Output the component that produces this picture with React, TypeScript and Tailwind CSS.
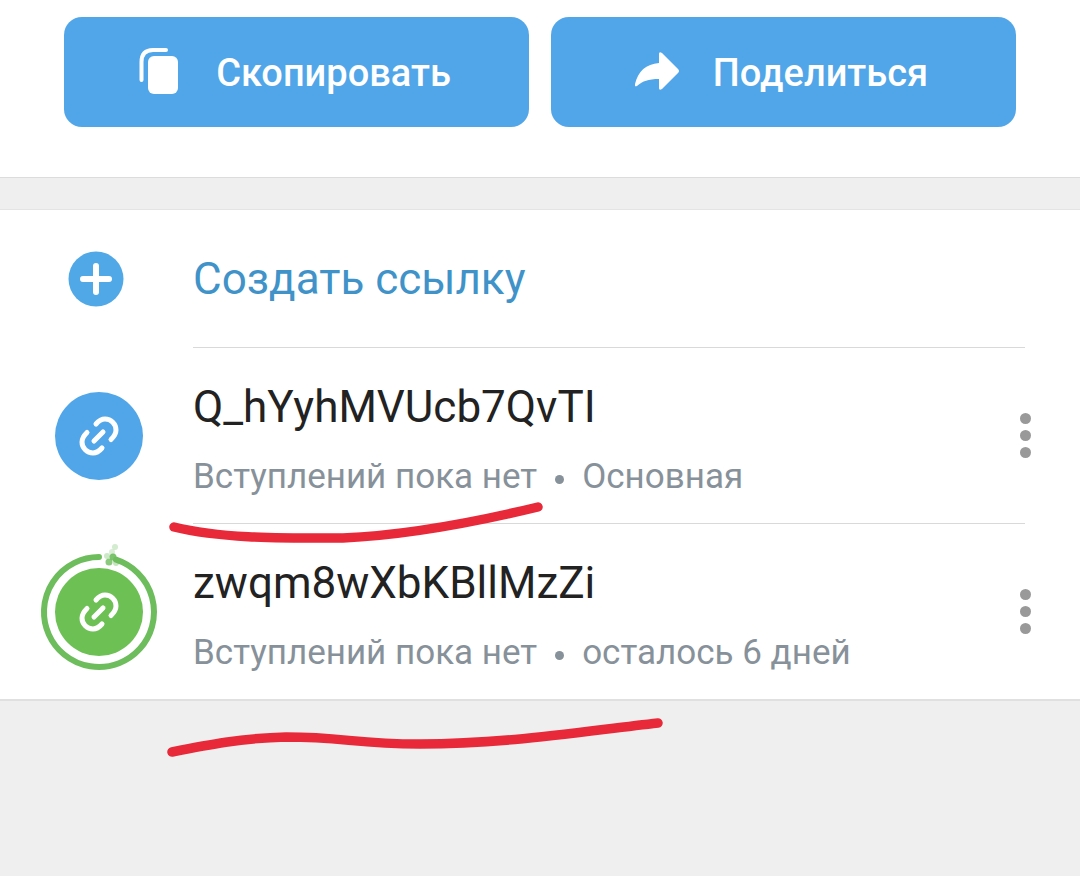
import type { ReactNode } from 'react';

type InviteLink = {
  name: string;
  joined: string;
  status: string;
  temporary: boolean;
};

const links: InviteLink[] = [
  { name: 'Q_hYyhMVUcb7QvTI', joined: 'Вступлений пока нет', status: 'Основная', temporary: false },
  { name: 'zwqm8wXbKBllMzZi', joined: 'Вступлений пока нет', status: 'осталось 6 дней', temporary: true },
];

function CopyIcon() {
  return (
    <svg viewBox="0 0 44 48" className="h-12 w-11 shrink-0" fill="none" aria-hidden="true">
      <path d="M3.5 32V14Q3.5 2 15 2H28" stroke="white" strokeWidth="4" strokeLinecap="round" />
      <rect x="10" y="8" width="30" height="38" rx="6" fill="white" />
    </svg>
  );
}

function ShareIcon() {
  return (
    <svg viewBox="0 0 44 48" className="h-12 w-11 shrink-0" fill="white" aria-hidden="true">
      <path d="M24 15V6Q24 3 27 5L43 21Q45 23 43 25L27 41Q24 43 24 40V31C13 31 8 33 2 38Q-1 39 0 36C3 23 11 16 24 15Z" />
    </svg>
  );
}

function LinkIcon({ temporary }: { temporary: boolean }) {
  return (
    <svg viewBox="-70 -70 140 140" className="-mx-[26px] size-[140px] shrink-0" fill="none" aria-hidden="true">
      <circle r="44" fill={temporary ? '#6dc054' : '#50a6e8'} />
      <g stroke="white" strokeWidth="5" strokeLinecap="round">
        <path d="M-3-12C0-15.500 3-17 6-17A11 11 0 0 1 17-6C17-3 15.500 0 12 3.500" />
        <path d="M3 12C0 15.500-3 17-6 17A11 11 0 0 1-17 6C-17 3-15.500 0-12-3.500" />
        <path d="M-5 5 4-4" />
      </g>
      {temporary && (
        <>
          <path d="M17-52.300A55 55 0 1 1 0-55" stroke="#6dbd5c" strokeWidth="6" strokeLinecap="round" />
          <g fill="#6dbd5c">
            <circle cx="10" cy="-50" r="3.5" opacity=".8" />
            <circle cx="14" cy="-55" r="3.5" opacity=".9" />
            <circle cx="8" cy="-56" r="3" opacity=".35" />
            <circle cx="16" cy="-65" r="3" opacity=".3" />
            <circle cx="13" cy="-60" r="3" opacity=".25" />
            <circle cx="17" cy="-49" r="3" opacity=".4" />
          </g>
        </>
      )}
    </svg>
  );
}

function ActionButton({ icon, children }: { icon: ReactNode; children: ReactNode }) {
  return (
    <button className="flex h-[110px] flex-1 items-center justify-center gap-[34px] rounded-[18px] bg-[#50a6e8] pr-1 text-[38px] font-medium text-white">
      {icon}
      <span className="pt-0.5">{children}</span>
    </button>
  );
}

export default function App() {
  return (
    <div className="min-h-screen bg-[#efefef] font-['Roboto',sans-serif]">
      {/* Actions */}
      <div className="flex gap-[22px] border-b border-[#dcdcdc] bg-white px-16 pt-[17px] pb-[50px]">
        <ActionButton icon={<CopyIcon />}>Скопировать</ActionButton>
        <ActionButton icon={<ShareIcon />}>Поделиться</ActionButton>
      </div>

      {/* Links */}
      <div className="relative mt-[31px] border-t border-b-2 border-t-[#e4e4e4] border-b-[#e0e0e0] bg-white">
        <button className="flex h-[137px] w-full items-center text-left text-[44px] text-[#3f93c9]">
          <span className="flex w-[193px] shrink-0 pl-[68px]">
            <svg viewBox="0 0 56 56" className="size-14" aria-hidden="true">
              <circle cx="28" cy="28" r="27.5" fill="#50a9e6" />
              <path d="M15 28H41M28 15V41" stroke="white" strokeWidth="6" strokeLinecap="round" />
            </svg>
          </span>
          Создать ссылку
        </button>

        <ul>
          {links.map((link) => (
            <li key={link.name}>
              <div className="mr-[55px] ml-[193px] h-px bg-[#d9d9d9]" />
              <div className="flex h-[175px] items-center pr-[33px]">
                <div className="flex w-[193px] shrink-0 pl-[55px]">
                  <LinkIcon temporary={link.temporary} />
                </div>
                <div className="min-w-0 flex-1 pt-3">
                  <p className="text-[44px] leading-[60px] text-[#222222]">{link.name}</p>
                  <p className="mt-2.5 flex items-center text-[35px] leading-[60px] text-[#87919a]">
                    {link.joined}
                    <span className="mx-[18px] mt-1.5 size-[9px] rounded-full bg-[#87919a]" />
                    {link.status}
                  </p>
                </div>
                <button aria-label="Меню" className="flex w-11 flex-col items-center gap-[6px] py-4">
                  <span className="size-[11px] rounded-full bg-[#999999]" />
                  <span className="size-[11px] rounded-full bg-[#999999]" />
                  <span className="size-[11px] rounded-full bg-[#999999]" />
                </button>
              </div>
            </li>
          ))}
        </ul>

        {/* Marker strokes */}
        <svg
          viewBox="160 490 520 280"
          className="pointer-events-none absolute top-[280px] left-[160px] h-[280px] w-[520px]"
          fill="none"
          stroke="#e82939"
          strokeWidth="9.5"
          strokeLinecap="round"
          aria-hidden="true"
        >
          <path d="M174 527C223 539 283 538 343 538C412 535 480 521 538 507" />
          <path d="M172 752C207 745 242 738 286 737C345 737 354 744 420 744C505 744 578 732 658 723" />
        </svg>
      </div>
    </div>
  );
}
